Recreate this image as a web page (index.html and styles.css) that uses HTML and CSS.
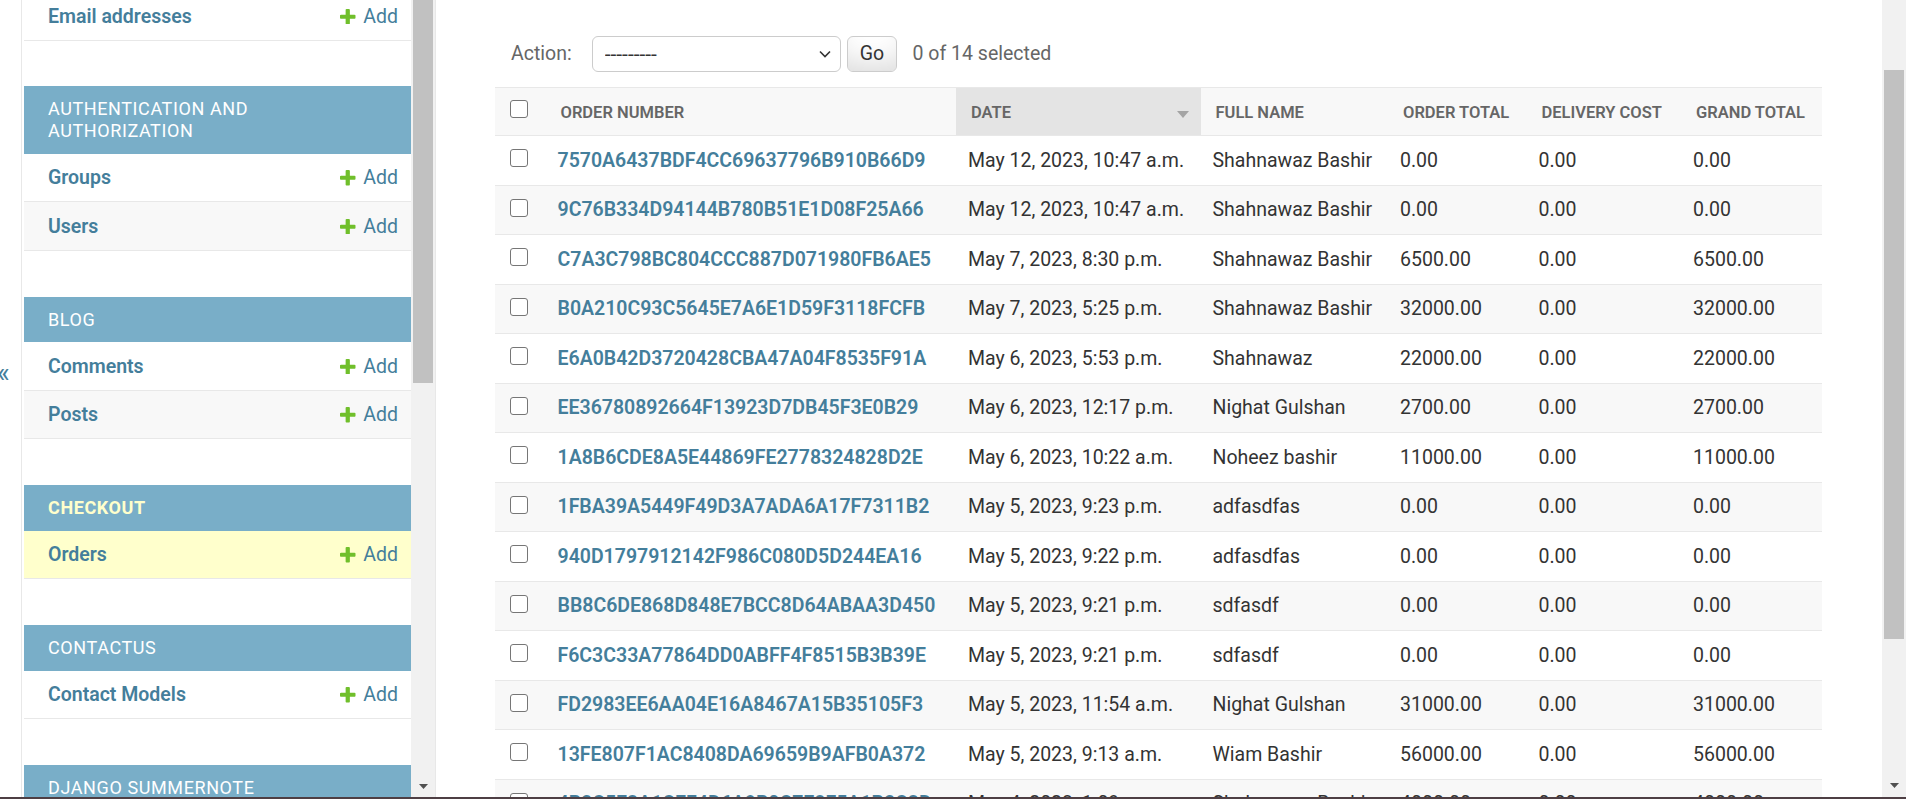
FILE: index.html
```html
<!DOCTYPE html>
<html lang="en">
<head>
<meta charset="utf-8">
<title>Select order to change | Django site admin</title>
<link rel="stylesheet" href="styles.css">
</head>
<body>
<div class="screen">
  <div class="page">
    <div class="toggle"><span class="toggle-glyph">&laquo;</span></div>

    <nav class="sidebar">
      <div class="sb-content">
        <table class="module first">
          <tr><th><a class="model-link" href="#">Email addresses</a></th><td><a class="addlink" href="#"><svg class="plus" viewBox="192 188 1408 1408"><path d="M1600 796v192q0 40-28 68t-68 28h-416v416q0 40-28 68t-68 28h-192q-40 0-68-28t-28-68v-416h-416q-40 0-68-28t-28-68v-192q0-40 28-68t68-28h416v-416q0-40 28-68t68-28h192q40 0 68 28t28 68v416h416q40 0 68 28t28 68z"/></svg>Add</a></td></tr>
        </table>

        <table class="module">
          <caption>AUTHENTICATION AND AUTHORIZATION</caption>
          <tr><th><a class="model-link" href="#">Groups</a></th><td><a class="addlink" href="#"><svg class="plus" viewBox="192 188 1408 1408"><path d="M1600 796v192q0 40-28 68t-68 28h-416v416q0 40-28 68t-68 28h-192q-40 0-68-28t-28-68v-416h-416q-40 0-68-28t-28-68v-192q0-40 28-68t68-28h416v-416q0-40 28-68t68-28h192q40 0 68 28t28 68v416h416q40 0 68 28t28 68z"/></svg>Add</a></td></tr>
          <tr class="alt"><th><a class="model-link" href="#">Users</a></th><td><a class="addlink" href="#"><svg class="plus" viewBox="192 188 1408 1408"><path d="M1600 796v192q0 40-28 68t-68 28h-416v416q0 40-28 68t-68 28h-192q-40 0-68-28t-28-68v-416h-416q-40 0-68-28t-28-68v-192q0-40 28-68t68-28h416v-416q0-40 28-68t68-28h192q40 0 68 28t28 68v416h416q40 0 68 28t28 68z"/></svg>Add</a></td></tr>
        </table>

        <table class="module">
          <caption>BLOG</caption>
          <tr><th><a class="model-link" href="#">Comments</a></th><td><a class="addlink" href="#"><svg class="plus" viewBox="192 188 1408 1408"><path d="M1600 796v192q0 40-28 68t-68 28h-416v416q0 40-28 68t-68 28h-192q-40 0-68-28t-28-68v-416h-416q-40 0-68-28t-28-68v-192q0-40 28-68t68-28h416v-416q0-40 28-68t68-28h192q40 0 68 28t28 68v416h416q40 0 68 28t28 68z"/></svg>Add</a></td></tr>
          <tr class="alt"><th><a class="model-link" href="#">Posts</a></th><td><a class="addlink" href="#"><svg class="plus" viewBox="192 188 1408 1408"><path d="M1600 796v192q0 40-28 68t-68 28h-416v416q0 40-28 68t-68 28h-192q-40 0-68-28t-28-68v-416h-416q-40 0-68-28t-28-68v-192q0-40 28-68t68-28h416v-416q0-40 28-68t68-28h192q40 0 68 28t28 68v416h416q40 0 68 28t28 68z"/></svg>Add</a></td></tr>
        </table>

        <table class="module current-app">
          <caption>CHECKOUT</caption>
          <tr class="current-model"><th><a class="model-link" href="#">Orders</a></th><td><a class="addlink" href="#"><svg class="plus" viewBox="192 188 1408 1408"><path d="M1600 796v192q0 40-28 68t-68 28h-416v416q0 40-28 68t-68 28h-192q-40 0-68-28t-28-68v-416h-416q-40 0-68-28t-28-68v-192q0-40 28-68t68-28h416v-416q0-40 28-68t68-28h192q40 0 68 28t28 68v416h416q40 0 68 28t28 68z"/></svg>Add</a></td></tr>
        </table>

        <table class="module">
          <caption>CONTACTUS</caption>
          <tr><th><a class="model-link" href="#">Contact Models</a></th><td><a class="addlink" href="#"><svg class="plus" viewBox="192 188 1408 1408"><path d="M1600 796v192q0 40-28 68t-68 28h-416v416q0 40-28 68t-68 28h-192q-40 0-68-28t-28-68v-416h-416q-40 0-68-28t-28-68v-192q0-40 28-68t68-28h416v-416q0-40 28-68t68-28h192q40 0 68 28t28 68v416h416q40 0 68 28t28 68z"/></svg>Add</a></td></tr>
        </table>

        <table class="module">
          <caption>DJANGO SUMMERNOTE</caption>
          <tr><th><a class="model-link" href="#">Attachments</a></th><td><a class="addlink" href="#">Add</a></td></tr>
        </table>
      </div>
      <div class="scrollbar sb-scroll">
        <div class="thumb sb-thumb"></div>
        <svg class="scroll-arrow" viewBox="0 0 9 5"><polygon points="0,0 9,0 4.5,5"/></svg>
      </div>
    </nav>

    <main class="main">
      <div class="actions">
        <label class="action-label">Action:</label>
        <span class="select-wrap">
          <select class="action-select"><option>---------</option></select>
          <svg class="chevron" viewBox="0 0 12 8"><polyline points="1,1.5 6,6.5 11,1.5"/></svg>
        </span>
        <button class="go-button" type="button">Go</button>
        <span class="action-counter">0 of 14 selected</span>
      </div>

      <table class="result-list">
        <colgroup>
          <col class="c-check">
          <col class="c-order">
          <col class="c-date">
          <col class="c-name">
          <col class="c-total">
          <col class="c-delivery">
          <col class="c-grand">
        </colgroup>
        <thead>
          <tr>
            <th class="th-check"><input type="checkbox" class="cb"></th>
            <th>ORDER NUMBER</th>
            <th class="sorted"><div class="sorted-inner"><span>DATE</span><svg class="sort-arrow" viewBox="0 0 12 7"><polygon points="0,0 12,0 6,7"/></svg></div></th>
            <th>FULL NAME</th>
            <th>ORDER TOTAL</th>
            <th>DELIVERY COST</th>
            <th>GRAND TOTAL</th>
          </tr>
        </thead>
        <tbody>
          <tr><td class="td-check"><input type="checkbox" class="cb"></td><th><a href="#">7570A6437BDF4CC69637796B910B66D9</a></th><td>May 12, 2023, 10:47 a.m.</td><td>Shahnawaz Bashir</td><td>0.00</td><td>0.00</td><td>0.00</td></tr>
          <tr><td class="td-check"><input type="checkbox" class="cb"></td><th><a href="#">9C76B334D94144B780B51E1D08F25A66</a></th><td>May 12, 2023, 10:47 a.m.</td><td>Shahnawaz Bashir</td><td>0.00</td><td>0.00</td><td>0.00</td></tr>
          <tr><td class="td-check"><input type="checkbox" class="cb"></td><th><a href="#">C7A3C798BC804CCC887D071980FB6AE5</a></th><td>May 7, 2023, 8:30 p.m.</td><td>Shahnawaz Bashir</td><td>6500.00</td><td>0.00</td><td>6500.00</td></tr>
          <tr><td class="td-check"><input type="checkbox" class="cb"></td><th><a href="#">B0A210C93C5645E7A6E1D59F3118FCFB</a></th><td>May 7, 2023, 5:25 p.m.</td><td>Shahnawaz Bashir</td><td>32000.00</td><td>0.00</td><td>32000.00</td></tr>
          <tr><td class="td-check"><input type="checkbox" class="cb"></td><th><a href="#">E6A0B42D3720428CBA47A04F8535F91A</a></th><td>May 6, 2023, 5:53 p.m.</td><td>Shahnawaz</td><td>22000.00</td><td>0.00</td><td>22000.00</td></tr>
          <tr><td class="td-check"><input type="checkbox" class="cb"></td><th><a href="#">EE36780892664F13923D7DB45F3E0B29</a></th><td>May 6, 2023, 12:17 p.m.</td><td>Nighat Gulshan</td><td>2700.00</td><td>0.00</td><td>2700.00</td></tr>
          <tr><td class="td-check"><input type="checkbox" class="cb"></td><th><a href="#">1A8B6CDE8A5E44869FE2778324828D2E</a></th><td>May 6, 2023, 10:22 a.m.</td><td>Noheez bashir</td><td>11000.00</td><td>0.00</td><td>11000.00</td></tr>
          <tr><td class="td-check"><input type="checkbox" class="cb"></td><th><a href="#">1FBA39A5449F49D3A7ADA6A17F7311B2</a></th><td>May 5, 2023, 9:23 p.m.</td><td>adfasdfas</td><td>0.00</td><td>0.00</td><td>0.00</td></tr>
          <tr><td class="td-check"><input type="checkbox" class="cb"></td><th><a href="#">940D1797912142F986C080D5D244EA16</a></th><td>May 5, 2023, 9:22 p.m.</td><td>adfasdfas</td><td>0.00</td><td>0.00</td><td>0.00</td></tr>
          <tr><td class="td-check"><input type="checkbox" class="cb"></td><th><a href="#">BB8C6DE868D848E7BCC8D64ABAA3D450</a></th><td>May 5, 2023, 9:21 p.m.</td><td>sdfasdf</td><td>0.00</td><td>0.00</td><td>0.00</td></tr>
          <tr><td class="td-check"><input type="checkbox" class="cb"></td><th><a href="#">F6C3C33A77864DD0ABFF4F8515B3B39E</a></th><td>May 5, 2023, 9:21 p.m.</td><td>sdfasdf</td><td>0.00</td><td>0.00</td><td>0.00</td></tr>
          <tr><td class="td-check"><input type="checkbox" class="cb"></td><th><a href="#">FD2983EE6AA04E16A8467A15B35105F3</a></th><td>May 5, 2023, 11:54 a.m.</td><td>Nighat Gulshan</td><td>31000.00</td><td>0.00</td><td>31000.00</td></tr>
          <tr><td class="td-check"><input type="checkbox" class="cb"></td><th><a href="#">13FE807F1AC8408DA69659B9AFB0A372</a></th><td>May 5, 2023, 9:13 a.m.</td><td>Wiam Bashir</td><td>56000.00</td><td>0.00</td><td>56000.00</td></tr>
          <tr><td class="td-check"><input type="checkbox" class="cb"></td><th><a href="#">4B2C5E3A1CEF4D6A9B0C7E8F5A1B2C3D</a></th><td>May 4, 2023, 1:09 p.m.</td><td>Shahnawaz Bashir</td><td>4000.00</td><td>0.00</td><td>4000.00</td></tr>
        </tbody>
      </table>
    </main>

    <div class="scrollbar page-scroll">
      <div class="thumb page-thumb"></div>
      <svg class="scroll-arrow page-arrow" viewBox="0 0 9 5"><polygon points="0,0 9,0 4.5,5"/></svg>
    </div>
  </div>
  <div class="bottom-edge"></div>
</div>
</body>
</html>
```

FILE: styles.css
```css
* { box-sizing: border-box; }

html, body {
  margin: 0;
  padding: 0;
}

body {
  width: 1906px;
  height: 799px;
  overflow: hidden;
  background: #fff;
  color: #333;
  font-family: Roboto, "Liberation Sans", Arial, sans-serif;
  font-size: 19.5px;
}

a { text-decoration: none; color: #447e9b; }

.screen {
  display: flex;
  flex-direction: column;
  height: 799px;
}

.page {
  display: flex;
  height: 797px;
  overflow: hidden;
}

.bottom-edge {
  height: 2px;
  background: #4e3f44;
}

/* toggle */
.toggle {
  flex: 0 0 22px;
  border-right: 1px solid #e8e8e8;
  padding-top: 360px;
  overflow: hidden;
}

.toggle-glyph {
  display: block;
  color: #447e9b;
  font-size: 27px;
  line-height: 26px;
  margin-left: -3px;
}

/* sidebar */
.sidebar {
  flex: 0 0 414px;
  display: flex;
  border-right: 1px solid #e8e8e8;
}

.sb-content {
  flex: 0 0 389px;
  padding-left: 2px;
  overflow: hidden;
}

.module {
  width: 100%;
  border-collapse: separate;
  border-spacing: 0;
  margin-bottom: 45.7px;
}

.module.first { margin-top: -8px; }

.module caption {
  caption-side: top;
  text-align: left;
  background: #79aec8;
  color: #fff;
  font-size: 18px;
  font-weight: 400;
  letter-spacing: 0.6px;
  line-height: 21.7px;
  padding: 12px 30px 12px 24px;
}

.module.current-app caption {
  color: #ffc;
  font-weight: 700;
}

.module th,
.module td {
  line-height: 23.6px;
  padding-top: 12.7px;
  padding-bottom: 11.3px;
  border-bottom: 1px solid #e8e8e8;
  vertical-align: top;
}

.module th {
  width: 100%;
  text-align: left;
  padding-left: 24px;
  padding-right: 12px;
  font-weight: 600;
}

.module td {
  white-space: nowrap;
  padding-left: 0;
  padding-right: 13px;
}

.module tr.alt { background: #f8f8f8; }
.module tr.current-model { background: #ffc; }

.model-link { font-weight: 600; }

.addlink { font-weight: 400; }

.plus {
  width: 15.5px;
  height: 15.5px;
  fill: #70bf2b;
  vertical-align: -1.5px;
  margin-right: 7.5px;
}

/* scrollbars */
.scrollbar {
  flex: 0 0 24px;
  background: #f1f1f1;
  display: flex;
  flex-direction: column;
  align-items: center;
}

.thumb {
  width: 20px;
  background: #c1c1c1;
}

.sb-thumb { height: 383px; }

.page-thumb {
  margin-top: 70px;
  height: 569px;
}

.scroll-arrow {
  width: 9px;
  height: 5px;
  fill: #505050;
  margin-top: auto;
  margin-bottom: 8.5px;
}

.page-arrow { margin-bottom: 9.5px; }

/* main */
.main {
  flex: 1;
  padding: 21px 60px 0 59px;
  overflow: hidden;
}

.actions {
  display: flex;
  align-items: center;
  height: 66px;
  padding: 15px 16px;
  color: #666;
  line-height: 36px;
}

.select-wrap {
  position: relative;
  margin-left: 20px;
  height: 36px;
}

.action-select {
  -webkit-appearance: none;
  appearance: none;
  width: 249px;
  height: 36px;
  border: 1px solid #ccc;
  border-radius: 6px;
  background: #fff;
  color: #333;
  font-family: Roboto, "Liberation Sans", Arial, sans-serif;
  font-size: 21px;
  padding: 0 0 0 12px;
  margin: 0;
  display: block;
}

.chevron {
  position: absolute;
  right: 10px;
  top: 14px;
  width: 12px;
  height: 8px;
  fill: none;
  stroke: #333;
  stroke-width: 1.6;
}

.go-button {
  margin-left: 6px;
  height: 36px;
  padding: 0 12px;
  border: 1px solid #ccc;
  border-radius: 6px;
  background: #fff;
  box-shadow: 0 -22px 30px -15px rgba(0, 0, 0, 0.15) inset;
  color: #333;
  font-family: Roboto, "Liberation Sans", Arial, sans-serif;
  font-size: 19.5px;
  line-height: 1;
}

.action-counter {
  margin-left: 15.5px;
  color: #666;
}

/* result table */
.result-list {
  width: 1327px;
  table-layout: fixed;
  border-collapse: separate;
  border-spacing: 0;
}

.c-check { width: 50.5px; }
.c-order { width: 410.5px; }
.c-date { width: 244.5px; }
.c-name { width: 187.5px; }
.c-total { width: 138.5px; }
.c-delivery { width: 154.5px; }
.c-grand { width: 141px; }

.result-list thead th {
  background: #f8f8f8;
  border-top: 1px solid #e8e8e8;
  border-bottom: 1px solid #e8e8e8;
  padding: 13px 15px 11px;
  line-height: 23px;
  font-size: 16.5px;
  font-weight: 600;
  color: #666;
  text-align: left;
  vertical-align: middle;
  white-space: nowrap;
}

.result-list thead th.th-check {
  vertical-align: top;
  padding: 12px 0 0 15px;
}

.result-list thead th.sorted {
  background: #e4e4e4;
  padding-right: 11.5px;
}

.sorted-inner {
  display: flex;
  justify-content: space-between;
  align-items: center;
}

.sort-arrow {
  width: 12px;
  height: 7px;
  fill: #a4a4a4;
  margin-top: 4px;
}

.result-list tbody td,
.result-list tbody th {
  padding: 12.5px 12px 11.5px;
  line-height: 24.5px;
  border-bottom: 1px solid #e8e8e8;
  vertical-align: top;
  text-align: left;
  white-space: nowrap;
  overflow: hidden;
  font-weight: 400;
  color: #333;
}

.result-list tbody th a {
  font-weight: 600;
  color: #447e9b;
}

.result-list tbody tr:nth-child(even) { background: #f8f8f8; }

.result-list tbody td.td-check {
  padding: 13px 0 0 15px;
}

.cb {
  -webkit-appearance: none;
  appearance: none;
  display: block;
  width: 18px;
  height: 18px;
  margin: 0;
  border: 1.5px solid #767676;
  border-radius: 3px;
  background: #fff;
}
```
